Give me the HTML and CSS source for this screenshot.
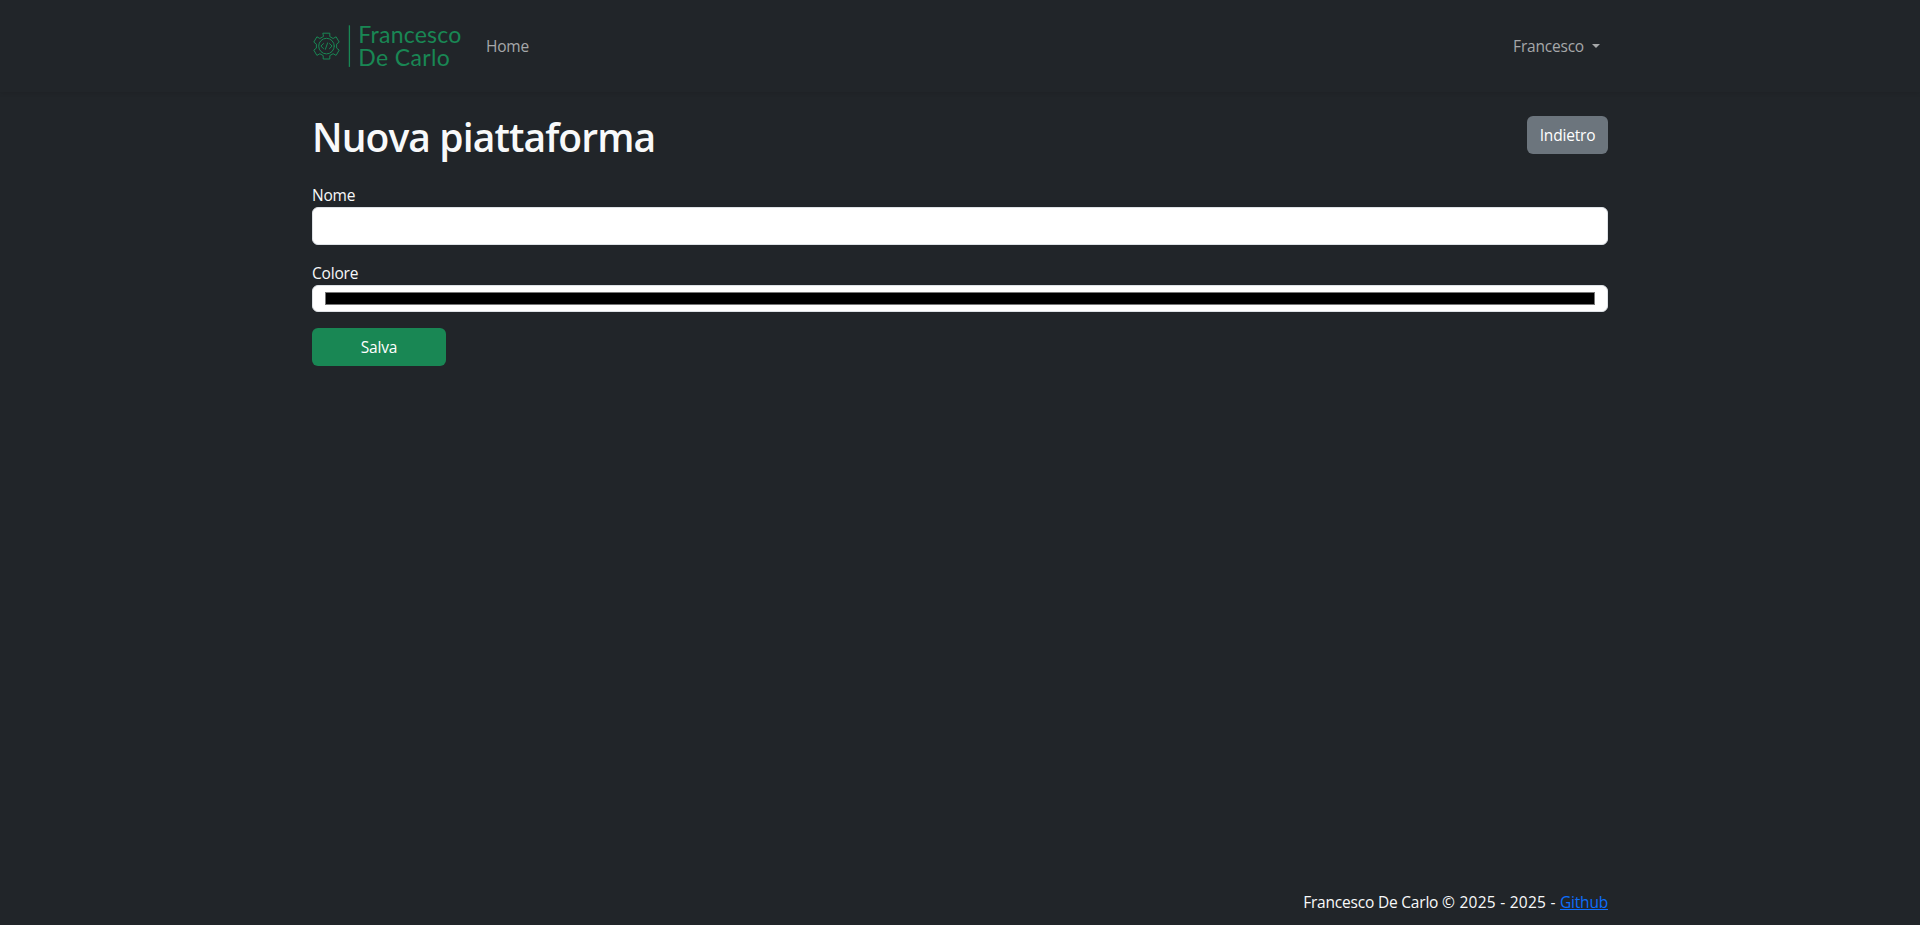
FILE: index.html
```html
<!DOCTYPE html>
<html lang="it">
<head>
<meta charset="utf-8">
<title>Nuova piattaforma</title>
<link rel="stylesheet" href="styles.css">
</head>
<body>
<header class="navbar">
  <div class="container navbar-inner">
    <a class="brand" aria-label="Francesco De Carlo">
      <svg width="150" height="44" viewBox="0 0 150 44">
        <g transform="translate(.5 0)" fill="none" stroke="#198754" stroke-linejoin="round" stroke-linecap="round">
          <path d="M10.7 9.2h6.6v3.4l3.3 1.9 3-1.7 3.1 5.3-2.6 2v4l2.6 2-3.1 5.3-3-1.7-3.3 1.9v3.4h-6.6v-3.4l-3.3-1.9-3 1.7-3.1-5.3 2.6-2v-4l-2.6-2 3.1-5.3 3 1.7 3.3-1.9z"/>
          <circle cx="14" cy="22.1" r="7.8"/>
          <path d="M11 19.6l-2.6 2.5 2.6 2.5M17 19.6l2.6 2.5-2.6 2.5M15.1 18.9l-2.2 6.4"/>
        </g>
        <path class="brand-rule" d="M37.4 1.3v41.6"/>
        <text class="brand-text" x="46.3" y="19" textLength="103">Francesco</text>
        <text class="brand-text" x="46.3" y="42" textLength="91.5">De Carlo</text>
      </svg>
    </a>
    <a class="nav-link home">Home</a>
    <a class="nav-link user">Francesco<span class="caret"></span></a>
  </div>
</header>
<main class="container">
  <div class="heading">
    <h1 class="title">Nuova piattaforma</h1>
    <button class="btn btn-secondary">Indietro</button>
  </div>
  <form>
    <label class="label" for="nome">Nome</label>
    <input class="field" id="nome" type="text">
    <label class="label" for="colore">Colore</label>
    <div class="field color-field" id="colore"><div class="swatch"></div></div>
    <button class="btn btn-success" type="button">Salva</button>
  </form>
</main>
<footer class="container footer"><span>Francesco De Carlo <span class="years">© 2025 - 2025 - </span><a class="link">Github</a></span></footer>
</body>
</html>
```
FILE: styles.css
```css
*, *::before, *::after { box-sizing: border-box; }
body {
  margin: 0;
  min-height: 100vh;
  display: flex;
  flex-direction: column;
  background: #212529;
  color: #f8f9fa;
  font: 400 15.5px/24px "Open Sans", "Noto Sans", sans-serif;
  letter-spacing: -.2px;
}
.container { width: 1296px; margin: 0 auto; }
.navbar { height: 92px; box-shadow: 0 2px 4px rgba(0, 0, 0, .075); }
.navbar-inner { height: 92px; display: flex; align-items: center; }
.brand { height: 44px; margin-right: 24px; }
.brand svg { display: block; overflow: visible; }
.brand-text { font: 400 23px Lato, sans-serif; letter-spacing: 0; fill: #198754; }
.brand-rule { stroke: #198754; stroke-width: 1.3; }
.nav-link { color: #a6a8a9; }
.user { margin-left: auto; padding-right: 8px; display: flex; align-items: center; }
.caret { margin-left: 8px; border: 4.8px solid transparent; border-top-color: currentColor; border-bottom: 0; }
main { flex: 1; }
.heading { display: flex; justify-content: space-between; align-items: flex-start; padding-top: 24px; height: 91px; }
.title { margin: -3px 0 0; font-size: 39px; font-weight: 600; line-height: 48px; letter-spacing: -.9px; }
.btn {
  height: 38px; padding: 0 12px; border: 0; border-radius: 6px;
  color: #fff; font: inherit; letter-spacing: inherit;
}
.btn-secondary { background: #6c757d; width: 81px; }
.btn-success { background: #198754; width: 134px; display: block; }
.label { display: block; }
.field {
  display: block; width: 100%; height: 38px; margin-bottom: 16px; padding: 6px 12px;
  background: #fff; border: 1px solid #dee2e6; border-radius: 6px;
}
.color-field { height: 27px; }
.swatch { height: 13px; background: #000; border: 1px solid #777; }
.footer { height: 35px; display: flex; justify-content: flex-end; }
.years { letter-spacing: .25px; }
.link { color: #0d6efd; text-decoration: underline; }
```
